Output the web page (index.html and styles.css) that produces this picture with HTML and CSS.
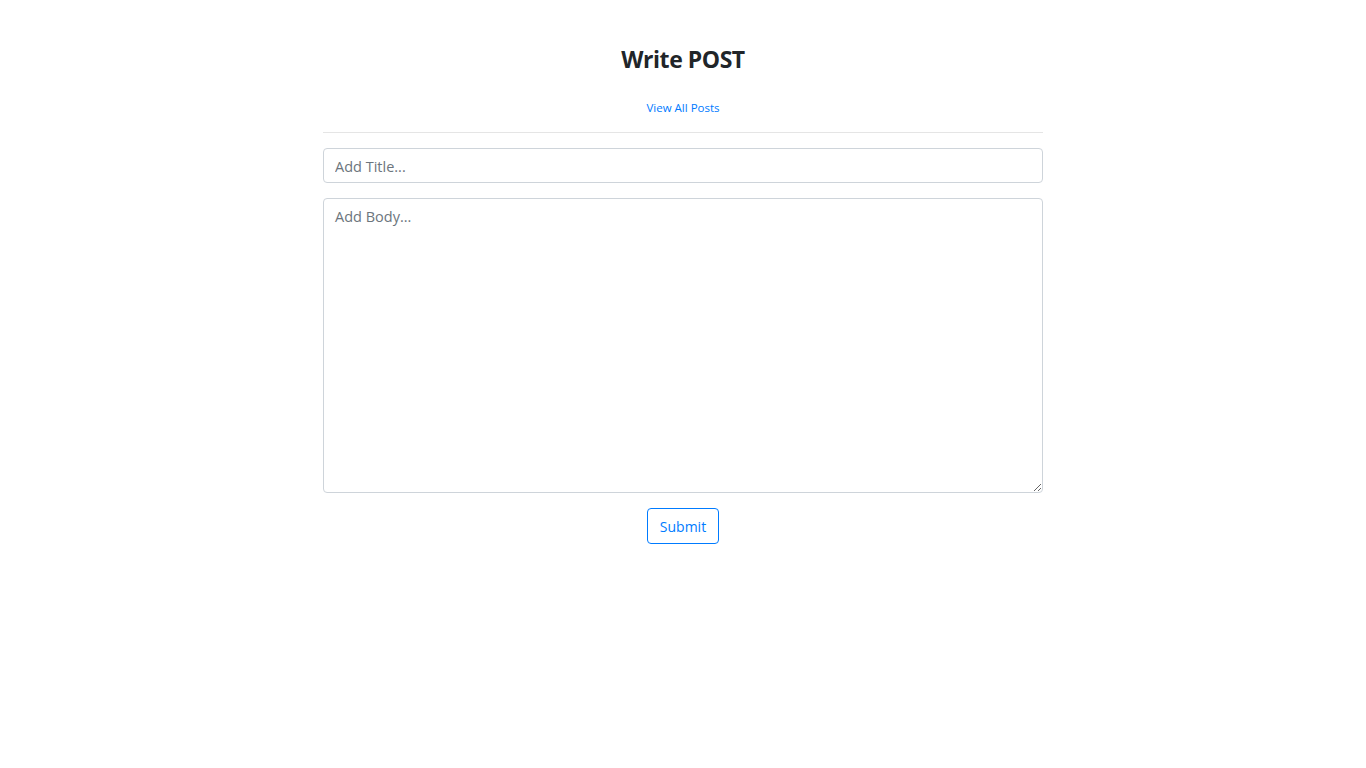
FILE: index.html
```html
<!DOCTYPE html>
<html lang="en">
<head>
<meta charset="utf-8">
<title>Write POST</title>
<link rel="stylesheet" href="styles.css">
</head>
<body>
<main class="page">
  <h1 class="title">Write POST</h1>
  <div class="links"><a class="link" href="#">View All Posts</a></div>
  <hr class="divider">
  <form class="form">
    <input class="field" type="text" placeholder="Add Title...">
    <textarea class="field area" placeholder="Add Body..."></textarea>
    <div class="actions"><button class="btn" type="button">Submit</button></div>
  </form>
</main>
</body>
</html>
```
FILE: styles.css
```css
* { box-sizing: border-box; }
html, body { margin: 0; background: #fff; }
body {
  font-family: "Open Sans", "Noto Sans", "Liberation Sans", sans-serif;
  color: #212529;
}
.page {
  width: 720px;
  margin: 0 auto;
  padding-top: 45px;
}
.title {
  margin: 0;
  font-size: 23px;
  line-height: 28px;
  font-weight: 700;
  text-align: center;
  letter-spacing: -0.45px;
}
.links {
  margin-top: 26px;
  text-align: center;
  font-size: 11.5px;
  line-height: 17px;
}
.link { color: #007bff; text-decoration: none; }
.divider {
  margin: 16px 0 0;
  border: 0;
  border-top: 1px solid rgba(0,0,0,.1);
}
.form {
  display: flex;
  flex-direction: column;
  gap: 15px;
  padding-top: 15px;
}
.field {
  display: block;
  width: 100%;
  height: 35px;
  padding: 5px 11px 4px;
  font-family: inherit;
  font-size: 14.5px;
  line-height: 24px;
  color: #495057;
  background: #fff;
  border: 1px solid #ced4da;
  border-radius: 4px;
  outline: none;
}
.field::placeholder { color: #6c757d; opacity: 1; }
.area {
  height: 295px;
  padding-top: 6px;
  resize: vertical;
}
.actions { display: flex; justify-content: center; }
.btn {
  width: 72px;
  height: 36px;
  font-family: inherit;
  font-size: 14px;
  color: #007bff;
  background: #fff;
  border: 1px solid #007bff;
  border-radius: 4px;
  padding: 0;
}
```
